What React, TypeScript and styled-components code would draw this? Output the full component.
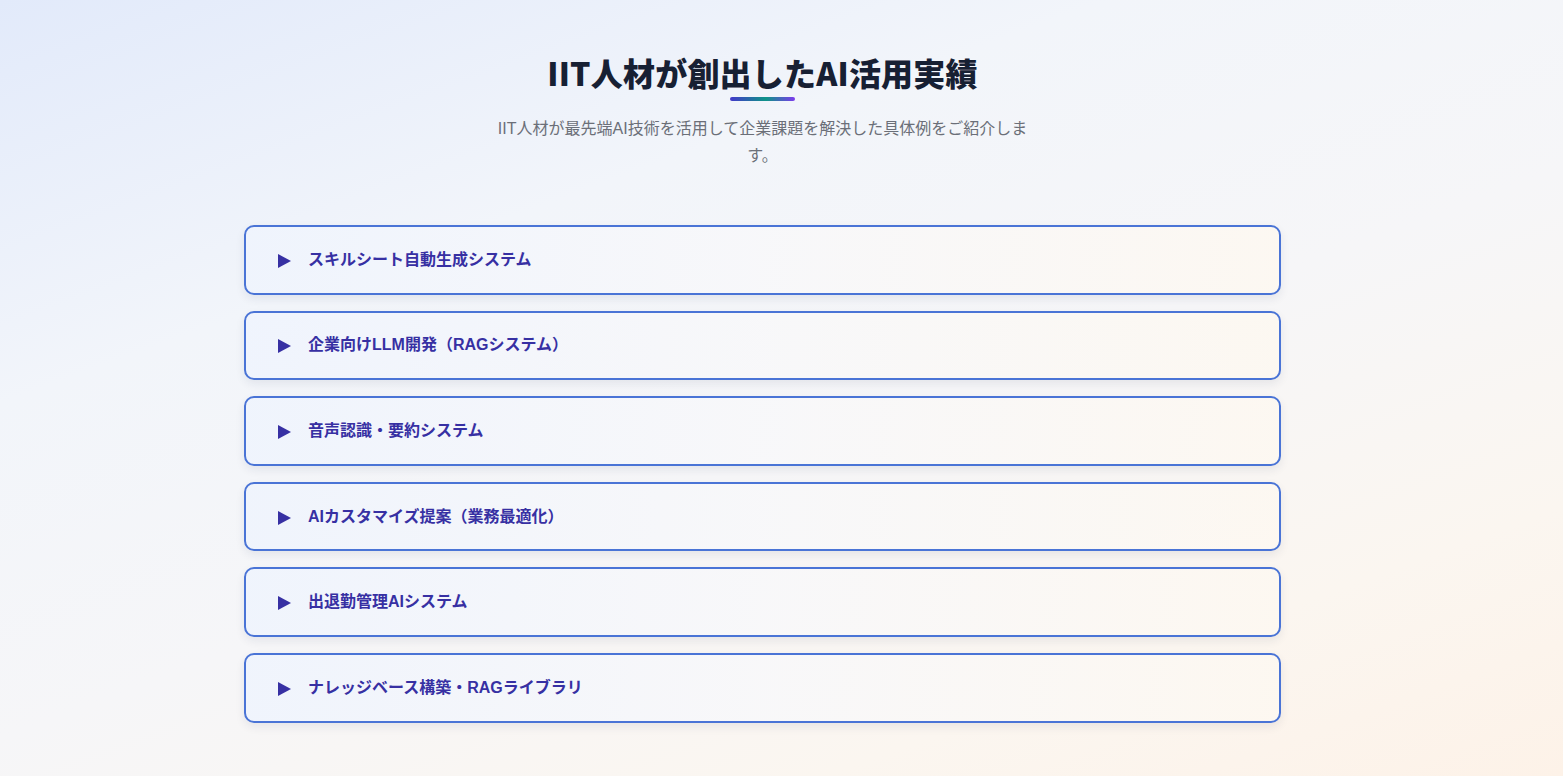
import styled, { createGlobalStyle } from "styled-components";

const GlobalStyle = createGlobalStyle`
  html, body {
    margin: 0;
    padding: 0;
  }
  body {
    font-family: "Liberation Sans", "Noto Sans CJK JP", sans-serif;
    background: linear-gradient(160deg, #e2eafa 0%, #f2f5fa 30%, #f6f6f8 55%, #fbf6f0 80%, #fdf2e8 100%);
    min-height: 776px;
  }
`;

const items = [
  "スキルシート自動生成システム",
  "企業向けLLM開発（RAGシステム）",
  "音声認識・要約システム",
  "AIカスタマイズ提案（業務最適化）",
  "出退勤管理AIシステム",
  "ナレッジベース構築・RAGライブラリ",
];

export default function App() {
  return (
    <>
      <GlobalStyle />
      <Page>
        <Section>
          <Header>
            <Title>IIT人材が創出したAI活用実績</Title>
            <Bar />
            <Lead>
              IIT人材が最先端AI技術を活用して企業課題を解決した具体例をご紹介します。
            </Lead>
          </Header>
          <List>
            {items.map((label) => (
              <Card key={label}>
                <Marker />
                <CardTitle>{label}</CardTitle>
              </Card>
            ))}
          </List>
        </Section>
      </Page>
    </>
  );
}

const Page = styled.main`
  min-height: 776px;
  box-sizing: border-box;
  padding: 50px 38px 0 0;
`;

const Section = styled.section`
  width: 1037px;
  margin: 0 auto;
`;

const Header = styled.header`
  display: flex;
  flex-direction: column;
  align-items: center;
  margin-bottom: 56px;
`;

const Title = styled.h2`
  margin: 0;
  font-family: "Noto Sans CJK JP", sans-serif;
  font-size: 32px;
  font-weight: 900;
  line-height: 44px;
  color: #172033;
  letter-spacing: 0.2px;
`;

const Bar = styled.div`
  width: 65px;
  height: 4px;
  margin-top: 3px;
  border-radius: 2px;
  background: linear-gradient(90deg, #4338ca 0%, #0d9488 55%, #7c3aed 100%);
`;

const Lead = styled.p`
  width: 545px;
  margin: 14px 0 0;
  font-size: 16px;
  line-height: 27px;
  color: #6b6f78;
  text-align: center;
`;

const List = styled.div`
  display: flex;
  flex-direction: column;
  gap: 16px;
`;

const Card = styled.div`
  display: flex;
  align-items: center;
  gap: 17px;
  padding: 20.8px 32px;
  border: 2px solid #4a74d6;
  border-radius: 10px;
  background: linear-gradient(90deg, rgba(239, 244, 253, 0.9) 0%, rgba(248, 248, 250, 0.9) 50%, rgba(253, 248, 241, 0.9) 100%);
  box-shadow: 0 4px 10px rgba(30, 41, 80, 0.08);
`;

const Marker = styled.span`
  width: 0;
  height: 0;
  border-left: 13px solid #3730a3;
  border-top: 7px solid transparent;
  border-bottom: 7px solid transparent;
  margin-top: 2px;
`;

const CardTitle = styled.span`
  font-size: 16px;
  font-weight: 700;
  line-height: 24px;
  color: #3730a3;
`;
